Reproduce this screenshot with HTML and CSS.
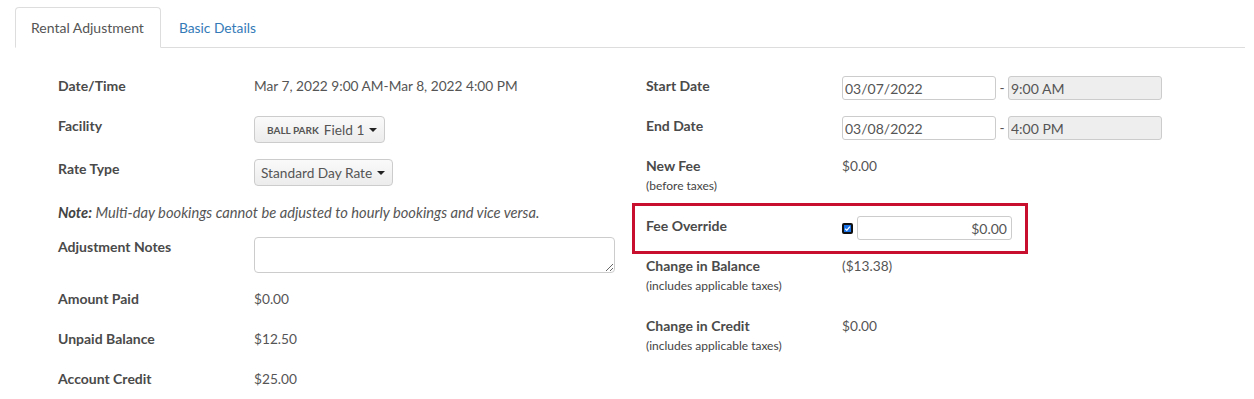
FILE: index.html
```html
<!DOCTYPE html>
<html lang="en">

<head>
    <meta charset="UTF-8" />
    <title>Rental Adjustment</title>
    <link rel="stylesheet" href="styles.css">
</head>

<body>
    <ul class="tabs">
        <li class="tab active">Rental Adjustment</li>
        <li class="tab"><a href="#">Basic Details</a></li>
    </ul>

    <div class="panel">
        <div class="col">
            <div class="row">
                <div class="label">Date/Time</div>
                <div class="value">Mar 7, 2022 9:00 AM-Mar 8, 2022 4:00 PM</div>
            </div>
            <div class="row">
                <div class="label">Facility</div>
                <div class="value">
                    <span class="select"><span class="center">BALL PARK</span>Field 1<span class="caret"></span></span>
                </div>
            </div>
            <div class="row">
                <div class="label">Rate Type</div>
                <div class="value">
                    <span class="select plain">Standard Day Rate<span class="caret"></span></span>
                </div>
            </div>
            <div class="row note">
                <p><em><strong>Note:</strong> Multi-day bookings cannot be adjusted to hourly bookings and vice versa.</em></p>
            </div>
            <div class="row">
                <div class="label">Adjustment Notes</div>
                <div class="value">
                    <textarea class="notes"></textarea>
                </div>
            </div>
            <div class="row">
                <div class="label">Amount Paid</div>
                <div class="value">$0.00</div>
            </div>
            <div class="row">
                <div class="label">Unpaid Balance</div>
                <div class="value">$12.50</div>
            </div>
            <div class="row">
                <div class="label">Account Credit</div>
                <div class="value">$25.00</div>
            </div>
        </div>

        <div class="col">
            <div class="row">
                <div class="label">Start Date</div>
                <div class="value dates">
                    <input class="date" type="text" value="03/07/2022" />
                    <span class="dash">-</span>
                    <input class="time" type="text" value="9:00 AM" readonly />
                </div>
            </div>
            <div class="row">
                <div class="label">End Date</div>
                <div class="value dates">
                    <input class="date" type="text" value="03/08/2022" />
                    <span class="dash">-</span>
                    <input class="time" type="text" value="4:00 PM" readonly />
                </div>
            </div>
            <div class="row">
                <div class="label">New Fee<small>(before taxes)</small></div>
                <div class="value">$0.00</div>
            </div>
            <div class="row highlight">
                <div class="label">Fee Override</div>
                <div class="value override">
                    <span class="check">
                        <svg width="9" height="9" viewBox="0 0 9 9"><path d="M1.5 4.8 L3.6 6.8 L7.6 2" fill="none" stroke="#fff" stroke-width="1.6" /></svg>
                    </span>
                    <input class="fee" type="text" value="$0.00" />
                </div>
            </div>
            <div class="row tall">
                <div class="label">Change in Balance<small>(includes applicable taxes)</small></div>
                <div class="value">($13.38)</div>
            </div>
            <div class="row tall">
                <div class="label">Change in Credit<small>(includes applicable taxes)</small></div>
                <div class="value">$0.00</div>
            </div>
        </div>
    </div>
</body>

</html>
```

FILE: styles.css
```css
* {
    box-sizing: border-box;
    margin: 0;
    padding: 0;
}

body {
    font-family: Lato, "Open Sans", sans-serif;
    font-size: 14px;
    line-height: 20px;
    color: #555;
    background: #fff;
    padding: 7px 9px 0 15px;
}

.tabs {
    display: flex;
    list-style: none;
    border-bottom: 1px solid #ddd;
    height: 41px;
}

.tab {
    padding: 10px 16px 10px 15px;
    height: 41px;
    border: 1px solid transparent;
    border-radius: 4px 4px 0 0;
}

.tab.active {
    border-color: #ddd;
    border-bottom-color: #fff;
    background: #fff;
    color: #555;
}

.tab a {
    color: #337ab7;
    text-decoration: none;
    padding-left: 2px;
    font-size: 13.8px;
}

.panel {
    display: flex;
    padding: 28px 0 0 43px;
}

.col {
    width: 588px;
}

.row {
    display: flex;
    align-items: flex-start;
    min-height: 24px;
    margin-bottom: 16px;
}

.row.note {
    min-height: 20px;
    margin-bottom: 15px;
}

.note p {
    color: #555;
    font-size: 14.7px;
}

.note strong {
    color: #444;
}

.label {
    width: 196px;
    flex-shrink: 0;
    font-weight: 700;
    color: #4a4a4a;
}

.label small {
    display: block;
    font-size: 12px;
    font-weight: 400;
    color: #444;
}

.value {
    color: #555;
    font-size: 13.7px;
}

.select {
    display: inline-flex;
    align-items: center;
    height: 27px;
    padding: 0 7px 0 12px;
    border: 1px solid #ccc;
    border-radius: 4px;
    background: linear-gradient(#fafafa, #ececec);
    color: #555;
}

.select.plain {
    padding-left: 6px;
}

.center {
    font-size: 10px;
    font-weight: 700;
    color: #555;
    margin-right: 5px;
}

.caret {
    display: inline-block;
    width: 0;
    height: 0;
    margin-left: 5px;
    border-left: 4px solid transparent;
    border-right: 4px solid transparent;
    border-top: 4px solid #222;
}

.notes {
    display: block;
    width: 361px;
    height: 36px;
    border: 1px solid #ccc;
    border-radius: 4px;
    font: inherit;
}

.dates {
    display: flex;
    align-items: center;
}

input {
    font-family: inherit;
    font-size: 14px;
    color: #555;
    height: 24px;
    padding: 0 2px;
    border: 1px solid #ccc;
    border-radius: 3px;
    outline: none;
}

.date {
    width: 154px;
}

.dash {
    width: 12px;
    text-align: center;
}

.time {
    width: 154px;
    background: #eee;
}

.row.highlight {
    width: 396px;
    margin: -9px 0 2px -14px;
    padding: 10px 11px 11px 11px;
    border: 3px solid #c8102e;
}

.override {
    display: flex;
    align-items: center;
}

.check {
    display: inline-flex;
    align-items: center;
    justify-content: center;
    width: 11px;
    height: 11px;
    background: #1a73e8;
    border: 2px solid #111;
    border-radius: 2px;
    margin-right: 4px;
}

.fee {
    width: 155px;
    text-align: right;
    padding-right: 4px;
}

.row.tall {
    margin-bottom: 20px;
}
```
